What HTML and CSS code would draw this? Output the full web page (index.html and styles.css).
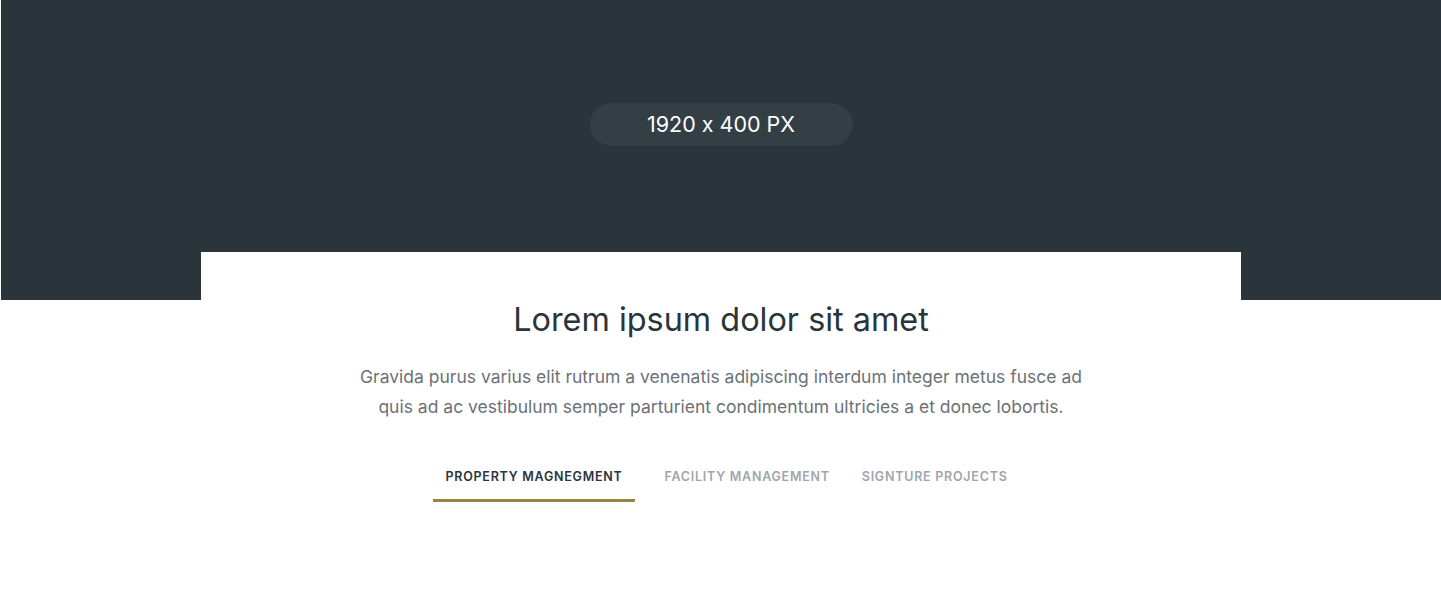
FILE: index.html
```html
<!DOCTYPE html>
<html>
<head>
<meta charset="utf-8">
<link rel="stylesheet" href="styles.css">
</head>
<body>
<div class="page">
  <header class="hero">
    <div class="pill">1920 x 400 PX</div>
  </header>
  <section class="card">
    <h1 class="title">Lorem ipsum dolor sit amet</h1>
    <p class="lead">Gravida purus varius elit rutrum a venenatis adipiscing interdum integer metus fusce ad quis ad ac vestibulum semper parturient condimentum ultricies a et donec lobortis.</p>
    <nav class="tabs">
      <a class="tab active">PROPERTY MAGNEGMENT</a>
      <a class="tab">FACILITY MANAGEMENT</a>
      <a class="tab">SIGNTURE PROJECTS</a>
    </nav>
  </section>
</div>
</body>
</html>
```

FILE: styles.css
```css
* { box-sizing: border-box; }
html, body { margin: 0; padding: 0; background: #fff; }
body { font-family: "Inter", "Lato", sans-serif; font-feature-settings: "calt" 0; }
.page { padding-left: 1px; width: 1441px; }
.hero {
  height: 300px;
  background: #29343b;
  display: flex;
  justify-content: center;
  padding-top: 103px;
}
.pill {
  width: 263px;
  height: 43px;
  border-radius: 22px;
  background: #333e45;
  color: #fff;
  font-size: 21.5px;
  display: flex;
  align-items: center;
  justify-content: center;
  padding-bottom: 2px;
}
.card {
  width: 1040px;
  margin: -48px auto 0;
  background: #fff;
  position: relative;
  text-align: center;
  padding-top: 48px;
}
.title {
  margin: 0;
  font-size: 32.4px;
  font-weight: 400;
  color: #29343b;
  line-height: 40px;
}
.lead {
  margin: 22px auto 0;
  width: 740px;
  font-size: 17.5px;
  line-height: 30px;
  color: #6b7176;
}
.tabs {
  display: flex;
  justify-content: center;
  gap: 8px;
  margin-top: 40px;
  padding-left: 11px;
}
.tab {
  font-size: 12.5px;
  font-weight: 600;
  letter-spacing: 0.75px;
  color: #a2a5a8;
  padding: 7px 12px 15px;
  border-bottom: 3px solid transparent;
}
.tab.active {
  color: #29343b;
  border-bottom-color: #9a8540;
  margin-right: 10px;
}
```
